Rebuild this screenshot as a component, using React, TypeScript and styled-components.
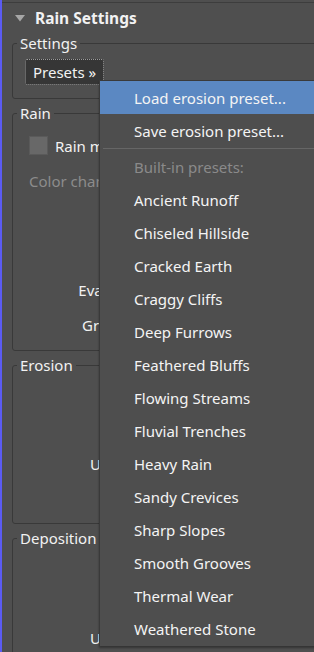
import styled, { createGlobalStyle } from "styled-components";

const GlobalStyle = createGlobalStyle`
  html, body {
    margin: 0;
    padding: 0;
    background: #4f4f4f;
    overflow: hidden;
  }
  body {
    font-family: "Noto Sans", "Open Sans", sans-serif;
    font-size: 15px;
    color: #f2f2f2;
  }
`

const Page = styled.div`
  display: flex;
  width: 314px;
  height: 652px;
  overflow: hidden;
  position: relative;
`

const Strip = styled.div`
  width: 2px;
  flex: none;
  background: #5b5bf2;
`

const Panel = styled.div`
  flex: 1;
  display: flex;
  flex-direction: column;
  gap: 4px;
  padding-top: 2px;
  overflow: hidden;
`

const Header = styled.div`
  display: flex;
  align-items: center;
  gap: 10px;
  height: 33px;
  padding: 4px 0 0 13px;
  border-top: 1px solid #3d3d3d;
  font-weight: 700;
  font-size: 15.5px;
`

const Group = styled.fieldset`
  margin: 0 -20px 0 10px;
  padding: 0 0 0 4px;
  border: 1px solid #393939;
  border-radius: 3px;
  min-inline-size: 0;
`

const Legend = styled.legend`
  padding: 0 3px;
  line-height: 20px;
`

const GroupBody = styled.div<{ $pad: string }>`
  display: flex;
  flex-direction: column;
  padding: ${p => p.$pad};
`

const PresetButton = styled.button`
  align-self: flex-start;
  height: 26px;
  padding: 0 7px;
  background: #363636;
  border: 1px dotted #9a9a9a;
  border-radius: 2px;
  color: #f2f2f2;
  font: inherit;
`

const CheckRow = styled.label`
  display: flex;
  align-items: center;
  gap: 7px;
  height: 35px;
  padding-left: 12px;
`

const Box = styled.span`
  width: 17px;
  height: 17px;
  background: #686868;
  border: 1px solid #5a5a5a;
`

const Row = styled.div<{ $dim?: boolean; $h?: number }>`
  display: flex;
  align-items: center;
  height: ${p => p.$h ?? 35}px;
  color: ${p => (p.$dim ? "#8c8c8c" : "#f2f2f2")};
`

const Label = styled.span`
  width: 150px;
  text-align: right;
  white-space: nowrap;
`

const FreeLabel = styled.span`
  padding-left: 12px;
  white-space: nowrap;
`

const Menu = styled.div`
  position: absolute;
  left: 99px;
  top: 80px;
  width: 230px;
  background: #4e4e4e;
  border-top: 1px solid #3a3a3a;
  border-left: 1px solid #3a3a3a;
  box-shadow: 0 2px 2px rgba(0, 0, 0, 0.35);
  padding-bottom: 1px;
`

const MenuItem = styled.div<{ $active?: boolean; $dim?: boolean }>`
  height: 33px;
  display: flex;
  align-items: center;
  padding-left: 34px;
  white-space: nowrap;
  background: ${p => (p.$active ? "#5b88c2" : "transparent")};
  color: ${p => (p.$dim ? "#8a8a8a" : "#f4f4f4")};
`

const Separator = styled.div`
  height: 1px;
  margin: 1px 0 1px 3px;
  background: #666666;
`

const presets = [
  "Ancient Runoff",
  "Chiseled Hillside",
  "Cracked Earth",
  "Craggy Cliffs",
  "Deep Furrows",
  "Feathered Bluffs",
  "Flowing Streams",
  "Fluvial Trenches",
  "Heavy Rain",
  "Sandy Crevices",
  "Sharp Slopes",
  "Smooth Grooves",
  "Thermal Wear",
  "Weathered Stone",
]

const Arrow = () => (
  <svg width="10" height="7" viewBox="0 0 10 7">
    <path d="M0 0 H10 L5 6.5 Z" fill="#a6a6a6" />
  </svg>
)

export default function App() {
  return <Page>
    <GlobalStyle />
    <Strip />
    <Panel>
      <Header><Arrow />Rain Settings</Header>

      <Group>
        <Legend>Settings</Legend>
        <GroupBody $pad="6px 0 13px 8px">
          <PresetButton>Presets »</PresetButton>
        </GroupBody>
      </Group>

      <Group>
        <Legend>Rain</Legend>
        <GroupBody $pad="5px 0 8px 0">
          <CheckRow><Box />Rain map</CheckRow>
          <Row $dim><FreeLabel>Color channel:</FreeLabel></Row>
          <Row />
          <Row $h={39} />
          <Row><Label>Evaporation:</Label></Row>
          <Row><Label>Gravity loss:</Label></Row>
        </GroupBody>
      </Group>

      <Group>
        <Legend>Erosion</Legend>
        <GroupBody $pad="1px 0 7px 0">
          <Row />
          <Row />
          <Row><Label>Undercuts:</Label></Row>
          <Row />
        </GroupBody>
      </Group>

      <Group>
        <Legend>Deposition</Legend>
        <GroupBody $pad="2px 0 20px 0">
          <Row />
          <Row />
          <Row><Label>Undercuts:</Label></Row>
        </GroupBody>
      </Group>
    </Panel>

    <Menu>
      <MenuItem $active>Load erosion preset...</MenuItem>
      <MenuItem>Save erosion preset...</MenuItem>
      <Separator />
      <MenuItem $dim>Built-in presets:</MenuItem>
      {presets.map(name => <MenuItem key={name}>{name}</MenuItem>)}
    </Menu>
  </Page>
}
